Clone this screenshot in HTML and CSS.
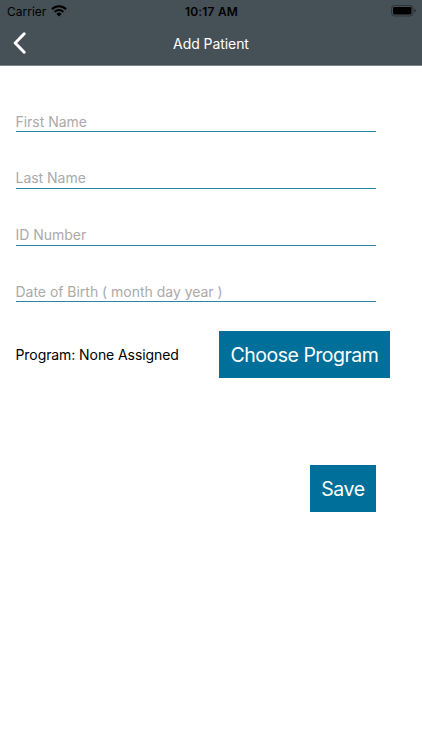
FILE: index.html
```html
<!DOCTYPE html>
<html lang="en">
<head>
<meta charset="utf-8">
<title>Add Patient</title>
<link rel="stylesheet" href="styles.css">
</head>
<body>
<header class="header">
  <div class="status">
    <div class="carrier"><span class="carrier-name">Carrier</span>
      <svg class="wifi" viewBox="0 0 16 12"><path d="M8 11.5 5.5 8.9a3.5 3.5 0 0 1 5 0z" fill="#000"/><path d="M3.6 6.9a6.2 6.2 0 0 1 8.8 0M1 4.2a9.9 9.9 0 0 1 14 0" fill="none" stroke="#000" stroke-width="2.1"/></svg>
    </div>
    <time class="time">10:17 AM</time>
    <svg class="battery" viewBox="0 0 25 12"><rect x=".5" y=".5" width="21.5" height="10.5" rx="3" fill="none" stroke="#2c3337"/><rect x="2" y="2" width="18.5" height="7.5" rx="1.4"/><path d="M23.4 4v3.6q1.3-.5 1.3-1.8T23.4 4z" fill="#20262a"/></svg>
  </div>
  <nav class="nav">
    <svg class="back" viewBox="0 0 14 22"><path d="M11.2 1.8 2.2 11l9 9.2" fill="none" stroke="#fff" stroke-width="3" stroke-linecap="round" stroke-linejoin="round"/></svg>
    <h1 class="title">Add Patient</h1>
  </nav>
</header>
<main class="form">
  <input class="field" placeholder="First Name" aria-label="First Name">
  <input class="field" placeholder="Last Name" aria-label="Last Name">
  <input class="field" placeholder="ID Number" aria-label="ID Number">
  <input class="field" placeholder="Date of Birth ( month day year )" aria-label="Date of Birth">
  <div class="program">
    <span class="program-label">Program: None Assigned</span>
    <button class="button choose"><span class="choose-text">Choose Program</span></button>
  </div>
  <button class="button save"><span class="save-text">Save</span></button>
</main>
</body>
</html>
```
FILE: styles.css
```css
* { box-sizing: border-box; }
body { margin: 0; background: #fff; color: #000; font-family: Inter, "Liberation Sans", sans-serif; }
.header { height: 66px; background: #465057; border-bottom: 1px solid #80878b; }
.status { height: 21px; display: grid; grid-template-columns: 1fr auto 1fr; align-items: center; padding: 0 6px 0 7px; }
.carrier { display: flex; align-items: center; gap: 5px; font-size: 12px; padding-top: 1px; }
.wifi { width: 16px; height: 12px; margin-top: -1px; }
.time { font-size: 12px; font-weight: 600; letter-spacing: .2px; padding-top: 1px; }
.battery { width: 25px; height: 12px; justify-self: end; }
.nav { height: 44px; display: grid; grid-template-columns: 1fr auto 1fr; align-items: center; padding: 0 13px; }
.back { width: 14px; height: 22px; }
.title { margin: 0; color: #fff; font-size: 14px; font-weight: 400; letter-spacing: -.07px; }
.form { display: flex; flex-direction: column; padding: 42px 32px 0 15.5px; }
.field { width: 360.5px; height: 24.4px; margin: 0 0 32.3px; padding: 3px 0 0; border: 0; border-bottom: 1px solid #2b84a6; background: none; font: 14px Inter, sans-serif; outline: 0; }
.field::placeholder { color: #aaa; opacity: 1; letter-spacing: -.02px; }
.program { display: flex; justify-content: space-between; align-items: center; height: 47px; margin-top: -4px; }
.program-label { font-size: 14px; letter-spacing: -.08px; }
.button { display: flex; align-items: center; justify-content: center; height: 47px; padding: 0; border: 0; background: #00709a; color: #fff; font: 20px Inter, sans-serif; }
.choose { width: 171px; padding-top: 1px; }
.choose-text { font-size: 19.5px; letter-spacing: -.5px; }
.save { width: 66px; margin: 87.3px 14px 0 0; align-self: flex-end; }
.save-text { font-size: 19.5px; letter-spacing: -.4px; }
```
